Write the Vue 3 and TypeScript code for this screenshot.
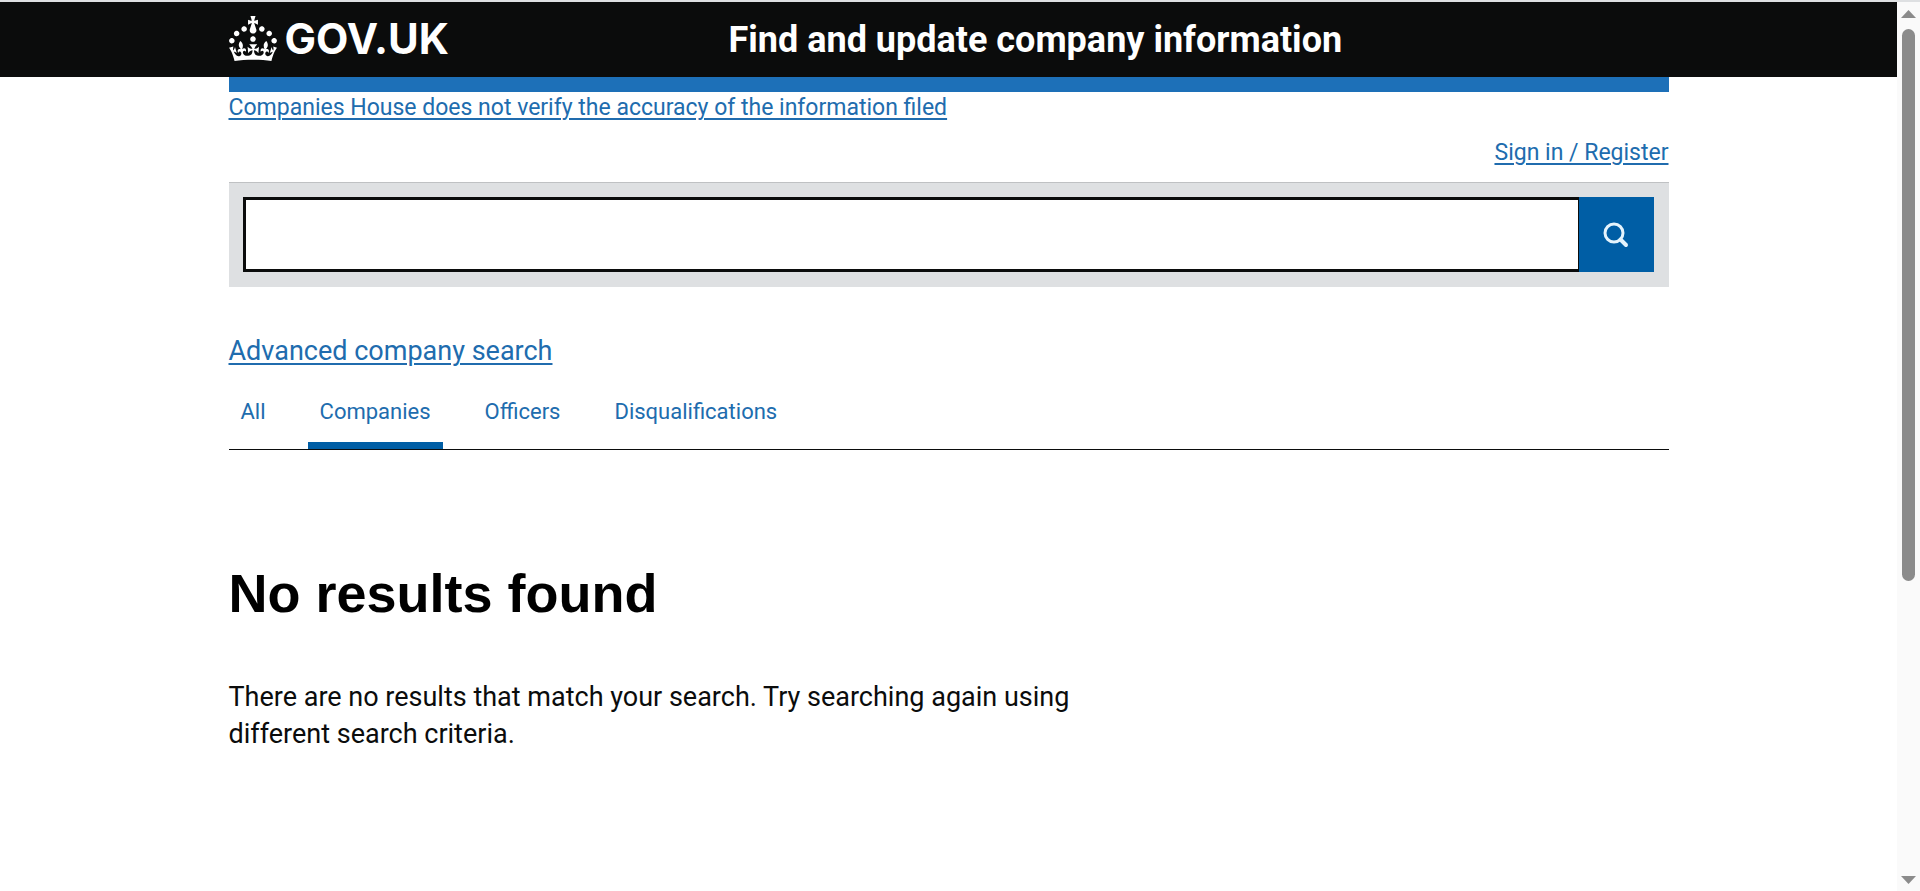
<script setup lang="ts">
import { ref } from 'vue'

interface Tab {
  label: string
  href: string
}

const tabs: Tab[] = [
  { label: 'All', href: '#all' },
  { label: 'Companies', href: '#companies' },
  { label: 'Officers', href: '#officers' },
  { label: 'Disqualifications', href: '#disqualifications' },
]

const activeTab = ref('Companies')
const query = ref('')
</script>

<template>
  <div class="window">
    <div class="page">
      <header class="header">
        <div class="container header-grid">
          <a class="brand" href="#home">
            <svg class="crown" viewBox="0 0 32 30" aria-hidden="true">
              <path
                fill="currentColor"
                d="M22.6 10.4c-1 .4-2-.1-2.4-1-.4-.9.1-2 1-2.4.9-.4 2 .1 2.4 1s-.1 2-1 2.4m-5.9 6.7c-.9.4-2-.1-2.4-1-.4-.9.1-2 1-2.4.9-.4 2 .1 2.4 1s-.1 2-1 2.4m10.8-3.7c-1 .4-2-.1-2.4-1-.4-.9.1-2 1-2.4.9-.4 2 .1 2.4 1s0 2-1 2.4m3.3 4.8c-1 .4-2-.1-2.4-1-.4-.9.1-2 1-2.4.9-.4 2 .1 2.4 1s-.1 2-1 2.4M17 4.7l2.3 1.2V2.5l-2.3.7-.2-.2.9-3h-3.4l.9 3-.2.2c-.1.1-2.3-.7-2.3-.7v3.4L15 4.7c.1.1.1.2.2.2l-1.3 4c-.1.2-.1.4-.1.6 0 1.1.8 2 1.9 2.2h.7c1-.2 1.9-1.1 1.9-2.1 0-.2 0-.4-.1-.6l-1.3-4c-.1-.2 0-.2.1-.3m-7.6 5.7c.9.4 2-.1 2.4-1 .4-.9-.1-2-1-2.4-.9-.4-2 .1-2.4 1s0 2 1 2.4m-5 3c.9.4 2-.1 2.4-1 .4-.9-.1-2-1-2.4-.9-.4-2 .1-2.4 1s.1 2 1 2.4m-3.2 4.8c.9.4 2-.1 2.4-1 .4-.9-.1-2-1-2.4-.9-.4-2 .1-2.4 1s0 2 1 2.4m14.8 11c4.4 0 8.6.3 12.3.8 1.1-4.5 2.4-7 3.7-8.8l-2.5-.9c.2 1.3.3 1.9 0 2.7-.4-.4-.8-1.1-1.1-2.3l-1.2 4c.7-.5 1.3-.8 2-.9-1.1 2.5-2.6 3.1-3.5 3-1.1-.2-1.7-1.2-1.5-2.1.3-1.2 1.5-1.5 2.1-.1 1.1-2.3-.8-3-2-2.3 1.9-1.9 2.1-3.5.6-5.6-2.1 1.6-2.1 3.2-1.2 5.5-1.2-1.4-3.2-.6-2.5 1.6.9-1.4 2.1-.5 1.9.8-.2 1.1-1.7 2.1-3.5 1.9-2.7-.2-2.9-2.1-2.9-3.6.7-.1 1.9.5 2.9 1.9l.4-4.3c-1.1 1.1-2.1 1.4-3.2 1.4.4-1.2 2.1-3 2.1-3h-5.4s1.7 1.9 2.1 3c-1.1 0-2.1-.2-3.2-1.4l.4 4.3c1-1.4 2.2-2 2.9-1.9-.1 1.5-.2 3.4-2.9 3.6-1.9.2-3.4-.8-3.5-1.9-.2-1.3 1-2.2 1.9-.8.7-2.3-1.2-3-2.5-1.6.9-2.2.9-3.9-1.2-5.5-1.5 2-1.3 3.7.6 5.6-1.2-.7-3.1 0-2 2.3.6-1.4 1.8-1.1 2.1.1.2.9-.3 1.9-1.5 2.1-.9.2-2.4-.5-3.5-3 .6 0 1.2.3 2 .9l-1.2-4c-.3 1.1-.7 1.9-1.1 2.3-.3-.8-.2-1.4 0-2.7l-2.9.9C1.3 23 2.6 25.5 3.7 30c3.7-.5 7.9-.8 12.3-.8"
              />
            </svg>
            <span>GOV.UK</span>
          </a>
          <a class="service" href="#service">Find and update company information</a>
        </div>
      </header>

      <div class="container content">
        <div class="phase-bar"></div>
        <div class="notice">
          <a class="link" href="#accuracy">Companies House does not verify the accuracy of the information filed</a>
        </div>
        <nav class="account" aria-label="Account">
          <a class="link" href="#signin">Sign in / Register</a>
        </nav>

        <form class="search" role="search" @submit.prevent>
          <input v-model="query" class="search-input" type="text" aria-label="Search for a company or officer" />
          <button class="search-button" type="submit" aria-label="Search">
            <svg class="search-icon" viewBox="0 0 26 26" aria-hidden="true">
              <circle cx="11" cy="11" r="9" />
              <path d="M17.5 17.5 23 23" />
            </svg>
          </button>
        </form>

        <div class="advanced">
          <a class="link" href="#advanced">Advanced company search</a>
        </div>

        <nav class="tabs" aria-label="Result types">
          <a
            v-for="tab in tabs"
            :key="tab.label"
            class="tab"
            :class="{ active: tab.label === activeTab }"
            :href="tab.href"
            @click.prevent="activeTab = tab.label"
          >{{ tab.label }}</a>
        </nav>

        <main class="results">
          <h1>No results found</h1>
          <p>There are no results that match your search. Try searching again using different search criteria.</p>
        </main>
      </div>
    </div>

    <div class="scrollbar" aria-hidden="true">
      <svg class="arrow" viewBox="0 0 15 8"><path d="M7.5 0 15 8H0z" /></svg>
      <div class="track"><div class="thumb"></div></div>
      <svg class="arrow" viewBox="0 0 15 8"><path d="M0 0h15L7.5 8z" /></svg>
    </div>
  </div>
</template>

<style>
body {
  margin: 0;
  background: #fff;
}
</style>

<style scoped>
.window {
  display: grid;
  grid-template-columns: minmax(0, 1fr) 23px;
  box-sizing: border-box;
  min-height: 100vh;
  border-top: 2px solid #dee0e2;
  font-family: Roboto, "Liberation Sans", sans-serif;
  color: #0b0c0c;
}

.container {
  box-sizing: border-box;
  width: 100%;
  max-width: 1440px;
  margin: 0 auto;
}

.header {
  background: #0b0c0c;
  color: #fff;
}

.header-grid {
  display: grid;
  grid-template-columns: 1fr 2fr;
  align-items: center;
  height: 75px;
}

.header a {
  color: inherit;
  text-decoration: none;
}

.brand {
  display: flex;
  align-items: center;
  gap: 8px;
  padding-bottom: 2px;
  font: bold 42px/48px Inter, "Liberation Sans", sans-serif;
}

.crown {
  width: 48px;
  height: 45px;
}

.service {
  padding-left: 20px;
  font-size: 36px;
  font-weight: 700;
  line-height: 42px;
}

.phase-bar {
  height: 15px;
  background: #1d70b8;
}

.link {
  color: #206cae;
  text-decoration: underline;
  text-decoration-thickness: 2px;
  text-underline-offset: 3px;
}

.notice,
.account {
  font-size: 23px;
  line-height: 32px;
}

.account {
  margin: 13px 0;
  text-align: right;
}

.search {
  display: flex;
  padding: 14px 15px 15px 14px;
  border-top: 1px solid #bfc1c3;
  background: #dee0e2;
}

.search-input {
  flex: 1;
  box-sizing: border-box;
  min-width: 0;
  height: 75px;
  padding: 0 12px;
  border: 3px solid #0b0c0c;
  border-right-width: 1px;
  border-radius: 0;
  background: #fff;
  font: inherit;
  font-size: 27px;
  outline: none;
}

.search-button {
  display: flex;
  align-items: center;
  justify-content: center;
  width: 75px;
  padding: 0;
  border: 0;
  background: #005ea5;
  color: #e4f3fc;
}

.search-icon {
  width: 26px;
  height: 26px;
  fill: none;
  stroke: currentColor;
  stroke-width: 3;
  stroke-linecap: round;
}

.search-icon path {
  stroke-width: 4;
}

.advanced {
  margin-top: 45px;
  font-size: 27px;
  line-height: 38px;
}

.tabs {
  display: flex;
  gap: 30px;
  margin-top: 26px;
  border-bottom: 1px solid #0b0c0c;
}

.tab {
  padding: 0 12px 14px;
  border-bottom: 7px solid transparent;
  color: #206cae;
  font-size: 22px;
  line-height: 32px;
  text-decoration: none;
}

.tab.active {
  border-bottom-color: #005ea5;
}

.results {
  max-width: 930px;
  margin-top: 113px;
}

h1 {
  margin: 0;
  color: #000;
  font: bold 54px/60px "Liberation Sans", Arial, sans-serif;
}

p {
  margin: 56px 0 0;
  font-size: 27px;
  line-height: 37px;
}

.scrollbar {
  display: flex;
  flex-direction: column;
  align-items: center;
  gap: 11px;
  padding: 8px 0 7px;
  background: #fafafa;
}

.arrow {
  width: 15px;
  height: 8px;
  fill: #8b8b8b;
}

.track {
  flex: 1;
}

.thumb {
  width: 13px;
  height: 66%;
  border-radius: 7px;
  background: #8b8b8b;
}
</style>
